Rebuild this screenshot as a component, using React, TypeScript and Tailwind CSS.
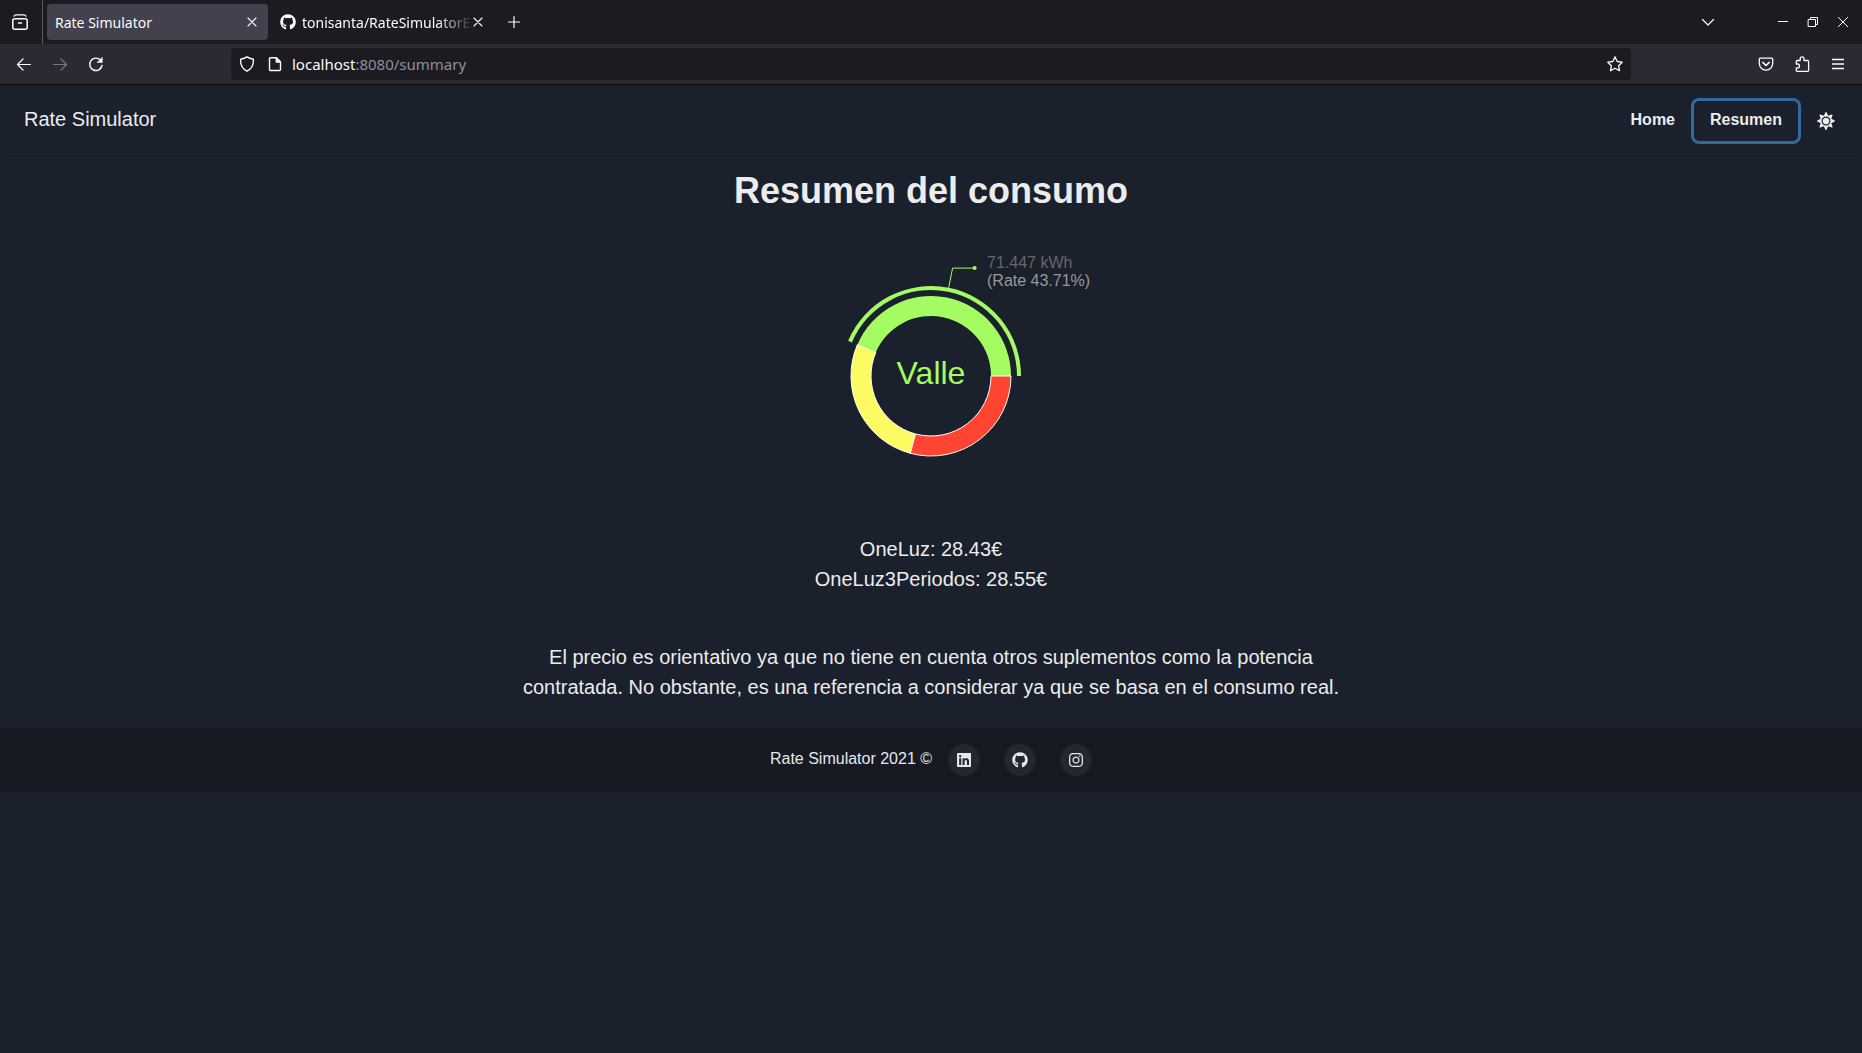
import type { ReactNode } from "react";
import { FaGithub, FaInstagram, FaLinkedin, FaSun } from "react-icons/fa";

function Icon({ children, size = 16, className = "" }: { children: ReactNode; size?: number; className?: string }) {
  return (
    <svg
      width={size}
      height={size}
      viewBox="0 0 16 16"
      fill="none"
      stroke="currentColor"
      strokeWidth="1.2"
      strokeLinecap="round"
      strokeLinejoin="round"
      className={className}
      aria-hidden="true"
    >
      {children}
    </svg>
  );
}

function CloseIcon() {
  return (
    <Icon>
      <path d="M4 4l8 8M12 4l-8 8" strokeWidth="1.1" />
    </Icon>
  );
}

function TabStrip() {
  return (
    <div className="flex h-11 items-center bg-[#1c1b22]">
      <button aria-label="Firefox View" className="flex h-11 w-[43px] shrink-0 items-center border-r border-[#5b5b66] pl-3">
        <Icon>
          <rect x="0.8" y="4.8" width="14.4" height="10.4" rx="2" strokeWidth="1.5" />
          <path d="M2 2.2Q2.600 .8 4 .8H12Q13.400 .8 14 2.200" strokeWidth="1.3" />
          <path d="M6.5 9h3" strokeWidth="1.5" />
        </Icon>
      </button>
      <div className="ml-1 flex h-9 w-[221px] items-center rounded bg-[#42414d] px-2">
        <button className="flex-1 pt-0.5 text-left">Rate Simulator</button>
        <button aria-label="Close Rate Simulator">
          <CloseIcon />
        </button>
      </div>
      <div className="flex h-9 items-center pl-3">
        <FaGithub size={16} className="shrink-0" />
        <button className="ml-1.5 pt-0.5 text-left whitespace-nowrap [mask-image:linear-gradient(to_right,black_80%,rgb(0_0_0/0.1))]">
          tonisanta/RateSimulatorE
        </button>
        <button aria-label="Close tonisanta/RateSimulator">
          <CloseIcon />
        </button>
      </div>
      <button aria-label="New tab" className="ml-5">
        <Icon>
          <path d="M8 2.5v11M2.5 8h11" />
        </Icon>
      </button>
      <div className="ml-auto flex items-center pr-[11px]">
        <button aria-label="List all tabs" className="mr-[59px]">
          <Icon>
            <path d="M2.500 5.500L8 11l5.500-5.500" />
          </Icon>
        </button>
        <div className="flex gap-[14px]">
          <button aria-label="Minimize">
            <Icon>
              <path d="M3 7.500h10" strokeLinecap="butt" strokeWidth="1" />
            </Icon>
          </button>
          <button aria-label="Restore">
            <Icon>
              <path d="M3.500 5.500h7v7h-7zM5.500 5.500v-2h7v7h-2" strokeWidth="1" />
            </Icon>
          </button>
          <button aria-label="Close window">
            <Icon>
              <path d="M3.300 3.300l9.400 9.400M12.700 3.300l-9.400 9.400" strokeWidth="1" />
            </Icon>
          </button>
        </div>
      </div>
    </div>
  );
}

function NavigationBar() {
  return (
    <div className="flex h-[41px] items-center border-b border-[#0c0c0d] bg-[#2b2a33] px-4">
      <div className="flex w-[215px] shrink-0 items-center gap-5">
        <button aria-label="Back">
          <Icon>
            <path d="M14.500 8.500H1.500M7 3L1.500 8.500 7 14" />
          </Icon>
        </button>
        <button aria-label="Forward" disabled className="text-[#77767e]">
          <Icon>
            <path d="M1.500 8.500h13M9 3l5.500 5.500L9 14" />
          </Icon>
        </button>
        <button aria-label="Reload">
          <Icon>
            <path d="M14 9.500A6.200 6.200 0 1 1 12.400 4" strokeWidth="1.400" />
            <path d="M14.300 1.500v5h-5z" fill="currentColor" strokeWidth=".5" />
          </Icon>
        </button>
      </div>
      <div className="flex h-8 min-w-0 flex-1 items-center rounded bg-[#1c1b22] px-2">
        <Icon>
          <path d="M8 .8Q10.500 2.400 14.300 3.200Q15.200 11.400 8 15.200Q.8 11.400 1.700 3.200Q5.500 2.400 8 .8z" strokeWidth="1.400" />
        </Icon>
        <Icon className="ml-3">
          <path d="M3.500 1.800h6l4 4v7.700a1 1 0 0 1-1 1h-9a1 1 0 0 1-1-1V2.800a1 1 0 0 1 1-1z" strokeWidth="1.400" />
          <path d="M9.200 1.800v4.300h4.300z" fill="currentColor" />
        </Icon>
        <div className="relative flex-1 pl-[9px] text-[15px] leading-5">
          <span aria-hidden="true" className="pointer-events-none">
            localhost<span className="text-[#8f8f9d]">:8080/summary</span>
          </span>
          <input
            aria-label="Address"
            defaultValue="localhost:8080/summary"
            className="absolute inset-0 w-full bg-transparent pl-[9px] text-transparent outline-none"
          />
        </div>
        <button aria-label="Bookmark this page">
          <Icon>
            <path d="M8 .9l2.200 4.600 5 .7-3.600 3.500.9 5L8 12.300l-4.500 2.400.9-5L.8 6.200l5-.7z" strokeWidth="1.300" />
          </Icon>
        </button>
      </div>
      <div className="flex w-[215px] shrink-0 items-center justify-end gap-5">
        <button aria-label="Save to Pocket">
          <Icon>
            <path d="M2.200 2.200h11.600a.9.9 0 0 1 .9.900V7.500a6.700 6.700 0 0 1-13.400 0V3.100a.9.9 0 0 1 .9-.9z" strokeWidth="1.300" />
            <path d="M4.800 6.400L8 9.500l3.200-3.100" strokeWidth="1.500" />
          </Icon>
        </button>
        <button aria-label="Extensions">
          <Icon>
            <path
              d="M2.300 8V5.500a1 1 0 0 1 1-1H6.200V2.700a1.900 1.900 0 0 1 3.800 0V4.500h3.600a1 1 0 0 1 1 1v9a.8.800 0 0 1-.8.800H3.100a.8.800 0 0 1-.8-.8V11.800H3.600a1.900 1.900 0 0 0 0-3.800z"
              strokeWidth="1.300"
            />
          </Icon>
        </button>
        <button aria-label="Open application menu">
          <Icon>
            <path d="M2 3.500h12M2 8h12M2 12.500h12" strokeLinecap="butt" strokeWidth="1.300" />
          </Icon>
        </button>
      </div>
    </div>
  );
}

const CX = 200;
const CY = 150;

function point(radius: number, degrees: number) {
  const a = (degrees * Math.PI) / 180;
  return `${CX + radius * Math.cos(a)} ${CY - radius * Math.sin(a)}`;
}

function sector(inner: number, outer: number, start: number, end: number) {
  return `M${point(outer, start)}A${outer} ${outer} 0 0 0 ${point(outer, end)}L${point(inner, end)}A${inner} ${inner} 0 0 1 ${point(inner, start)}Z`;
}

function ConsumptionChart() {
  return (
    <svg width="400" height="300" viewBox="0 0 400 300" role="img" aria-label="Consumo por periodo">
      <path d={sector(60, 80, 0, 157)} fill="#a4fc62" />
      <path d={sector(86, 90, 0, 157)} fill="#a4fc62" />
      <path d={sector(60, 80, 157, 255)} fill="#fcfc62" stroke="#fff" />
      <path d={sector(60, 80, 255, 360)} fill="#ff4532" stroke="#fff" />
      <path d="M217.700 61.700L221.600 42.100H243.600" stroke="#a4fc62" fill="none" />
      <circle cx="243.600" cy="42.100" r="2" fill="#a4fc62" />
      <text x="200" y="158" textAnchor="middle" fill="#a4fc62" className="text-[32px]">
        Valle
      </text>
      <text x="256" y="42" fill="#666" className="text-base">
        71.447 kWh
      </text>
      <text x="256" y="60" fill="#999" className="text-base">
        (Rate 43.71%)
      </text>
    </svg>
  );
}

function SocialLink({ label, children }: { label: string; children: ReactNode }) {
  return (
    <a href="#" aria-label={label} className="flex size-8 items-center justify-center rounded-full bg-[#24272f] text-gray-200">
      {children}
    </a>
  );
}

export default function App() {
  return (
    <div className="min-h-screen bg-[#1a202c] font-['Liberation_Sans',Arial,sans-serif] text-[#ececec]">
      <div className="font-['Noto_Sans',sans-serif] text-sm text-[#fbfbfe]">
        <TabStrip />
        <NavigationBar />
      </div>

      <header className="flex h-[74px] items-center justify-between pr-[27px] pb-0.5 pl-6 shadow-sm">
        <a href="#" className="pb-1 text-xl">
          Rate Simulator
        </a>
        <nav className="flex items-center font-bold">
          <a href="#" className="mr-4 pb-0.5">
            Home
          </a>
          <a
            href="#"
            className="mr-4 flex h-[46px] w-[110px] items-center justify-center rounded-lg border-[3px] border-[#316a9d] pb-0.5"
          >
            Resumen
          </a>
          <button aria-label="Cambiar tema">
            <FaSun size={18} />
          </button>
        </nav>
      </header>

      <main className="flex flex-col items-center pt-2 pb-[26px] text-center text-xl leading-[30px]">
        <h1 className="text-4xl leading-[48px] font-bold">Resumen del consumo</h1>
        <div className="mt-[11px]">
          <ConsumptionChart />
        </div>
        <p className="mt-2">OneLuz: 28.43€</p>
        <p>OneLuz3Periodos: 28.55€</p>
        <p className="mt-12 max-w-[832px]">
          El precio es orientativo ya que no tiene en cuenta otros suplementos como la potencia contratada. No obstante,
          es una referencia a considerar ya que se basa en el consumo real.
        </p>
      </main>

      <footer className="flex h-16 items-center justify-center gap-4 bg-[#171923] text-gray-200">
        <p className="pb-0.5">Rate Simulator 2021 ©</p>
        <div className="flex gap-6">
          <SocialLink label="LinkedIn">
            <FaLinkedin />
          </SocialLink>
          <SocialLink label="GitHub">
            <FaGithub />
          </SocialLink>
          <SocialLink label="Instagram">
            <FaInstagram />
          </SocialLink>
        </div>
      </footer>
    </div>
  );
}
